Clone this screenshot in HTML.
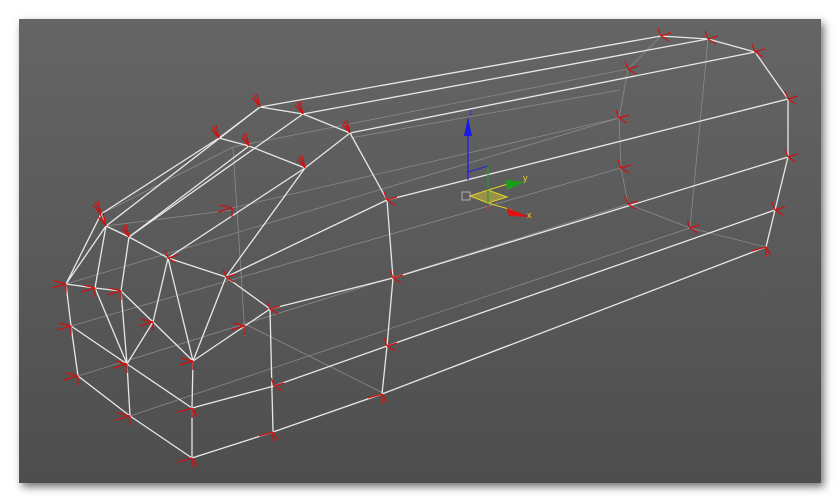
<!DOCTYPE html>
<html><head><meta charset="utf-8"><style>
html,body{margin:0;padding:0;background:#fff;width:840px;height:502px;overflow:hidden}
#vp{position:absolute;left:19px;top:19px;width:802px;height:464px;background:linear-gradient(#656565,#4e4e4e);box-shadow:3px 4px 8px rgba(0,0,0,0.55)}
svg{position:absolute;left:0;top:0}
</style></head><body>
<div id="vp"></div>
<svg width="840" height="502" viewBox="0 0 840 502" font-family="Liberation Sans, sans-serif">
<defs>
<g id="t1" stroke="#d01010" stroke-width="1.2"><line x1="0" y1="0" x2="-6" y2="-12"/><line x1="0" y1="0" x2="-3" y2="-13"/><line x1="0" y1="0" x2="-8" y2="-9"/></g>
<g id="t2" stroke="#d01010" stroke-width="1.2"><line x1="0" y1="0" x2="-14" y2="4"/><line x1="0" y1="0" x2="-12" y2="-3"/><line x1="0" y1="0" x2="0" y2="9"/></g>
<g id="t3" stroke="#d01010" stroke-width="1.2"><line x1="0" y1="0" x2="10" y2="-3"/><line x1="0" y1="0" x2="8" y2="5"/><line x1="0" y1="0" x2="-3" y2="-8"/></g>
<g id="t4" stroke="#d01010" stroke-width="1.2"><line x1="0" y1="0" x2="-14" y2="4"/><line x1="0" y1="0" x2="5" y2="8"/><line x1="0" y1="0" x2="0" y2="10"/></g>
</defs>
<g stroke="#8a8a8a" stroke-width="0.8" fill="none">
<line x1="101" y1="214" x2="233" y2="147"/>
<line x1="233" y1="147" x2="245" y2="336"/>
<line x1="106" y1="226" x2="232" y2="210"/>
<line x1="233" y1="147" x2="628" y2="69"/>
<line x1="232" y1="208" x2="619" y2="118"/>
<line x1="66" y1="284" x2="619" y2="118"/>
<line x1="71" y1="326" x2="621" y2="168"/>
<line x1="78" y1="376" x2="628" y2="204"/>
<line x1="130" y1="416" x2="690" y2="228"/>
<line x1="243" y1="323" x2="383" y2="393"/>
<line x1="350" y1="138" x2="620" y2="90"/>
<line x1="661" y1="36" x2="628" y2="69"/>
<polyline points="628,69 619,118 621,168 628,204 690,228 766,247"/>
<line x1="708" y1="39" x2="690" y2="228"/>
</g>
<g stroke="#e8e8e8" stroke-width="1.3" fill="none" stroke-linejoin="round">
<polyline points="661,36 708,39 755,52 788,99 788,157 775,210 766,247"/>
<line x1="260" y1="107" x2="661" y2="36"/>
<line x1="303" y1="114" x2="708" y2="39"/>
<line x1="350" y1="133" x2="755" y2="52"/>
<line x1="387" y1="200" x2="788" y2="99"/>
<line x1="393" y1="278" x2="788" y2="157"/>
<line x1="387" y1="346" x2="775" y2="210"/>
<line x1="382" y1="394" x2="766" y2="247"/>
<polyline points="260,107 303,114 350,133 387,200 393,278 387,346 382,394"/>
<polyline points="101,214 219,138 260,107"/>
<line x1="106" y1="226" x2="260" y2="107"/>
<line x1="129" y1="237" x2="249" y2="146"/>
<line x1="129" y1="237" x2="303" y2="114"/>
<polyline points="219,138 249,146 305,168 350,133"/>
<line x1="168" y1="258" x2="305" y2="168"/>
<line x1="226" y1="277" x2="305" y2="168"/>
<line x1="226" y1="277" x2="387" y2="200"/>
<line x1="270" y1="309" x2="393" y2="278"/>
<line x1="274" y1="386" x2="387" y2="346"/>
<polyline points="101,214 106,226 129,237 168,258 226,277 270,309 273,432 382,394"/>
<line x1="101" y1="214" x2="66" y2="284"/>
<line x1="106" y1="226" x2="66" y2="284"/>
<line x1="106" y1="226" x2="95" y2="288"/>
<line x1="129" y1="237" x2="121" y2="291"/>
<polyline points="66,284 95,288 121,291"/>
<polyline points="121,291 153,322 193,361"/>
<line x1="95" y1="288" x2="127" y2="364"/>
<line x1="121" y1="291" x2="127" y2="364"/>
<line x1="168" y1="258" x2="153" y2="322"/>
<line x1="168" y1="258" x2="193" y2="361"/>
<line x1="153" y1="322" x2="127" y2="364"/>
<line x1="226" y1="277" x2="193" y2="361"/>
<line x1="193" y1="361" x2="270" y2="309"/>
<polyline points="66,284 71,326 78,376 130,416 192,458 273,432"/>
<line x1="71" y1="326" x2="127" y2="364"/>
<polyline points="127,364 192,408 274,386"/>
<line x1="127" y1="364" x2="130" y2="416"/>
<line x1="193" y1="361" x2="192" y2="408"/>
<line x1="192" y1="408" x2="192" y2="458"/>
</g>
<g>
<use href="#t1" x="101" y="214"/><use href="#t1" x="106" y="226"/><use href="#t1" x="129" y="237"/>
<use href="#t1" x="260" y="107"/><use href="#t1" x="303" y="114"/><use href="#t1" x="350" y="133"/>
<use href="#t1" x="219" y="138"/><use href="#t1" x="249" y="146"/><use href="#t1" x="305" y="168"/>
<use href="#t2" x="66" y="284"/><use href="#t2" x="95" y="288"/><use href="#t2" x="121" y="291"/>
<use href="#t2" x="71" y="326"/><use href="#t2" x="78" y="376"/><use href="#t2" x="130" y="416"/>
<use href="#t4" x="192" y="458"/><use href="#t4" x="273" y="432"/><use href="#t4" x="382" y="394"/>
<use href="#t2" x="153" y="322"/><use href="#t2" x="193" y="361"/><use href="#t2" x="127" y="364"/>
<use href="#t4" x="192" y="408"/><use href="#t3" x="270" y="309"/><use href="#t3" x="274" y="386"/>
<use href="#t3" x="226" y="277"/><use href="#t3" x="387" y="200"/><use href="#t3" x="393" y="278"/>
<use href="#t3" x="387" y="346"/><use href="#t3" x="168" y="258"/>
<use href="#t3" x="661" y="36"/><use href="#t3" x="708" y="39"/><use href="#t3" x="755" y="52"/>
<use href="#t3" x="788" y="99"/><use href="#t3" x="788" y="157"/><use href="#t3" x="775" y="210"/>
<use href="#t4" x="766" y="247"/><use href="#t3" x="628" y="69"/><use href="#t3" x="619" y="118"/>
<use href="#t3" x="621" y="168"/><use href="#t3" x="628" y="204"/><use href="#t3" x="690" y="228"/>
<use href="#t2" x="232" y="208"/><use href="#t2" x="245" y="326"/>
</g>
<!-- gizmo -->
<g>
<polygon points="470,196 488,190 507,197 488,203" fill="rgba(200,190,60,0.55)" stroke="#e6d020" stroke-width="1"/>
<line x1="488" y1="203" x2="512" y2="210" stroke="#e6d020" stroke-width="1"/>
<line x1="488" y1="190" x2="508" y2="184" stroke="#e6d020" stroke-width="1"/>
<line x1="468" y1="180" x2="468" y2="130" stroke="#2020e0" stroke-width="1.3"/>
<polygon points="468,117 464,136 472,136" fill="#1a1ae8"/>
<polyline points="468,172 488,166 488,176" stroke="#2020e0" fill="none" stroke-width="1"/>
<line x1="488" y1="165" x2="488" y2="205" stroke="#20a020" stroke-width="1"/>
<line x1="488" y1="205" x2="488" y2="210" stroke="#d02020" stroke-width="1"/>
<polygon points="506,180 524,182 507,190" fill="#18a018"/>
<polygon points="507,208 530,217 509,216" fill="#e01010"/>
<rect x="462" y="192" width="8" height="8" fill="none" stroke="#b0b0b0" stroke-width="1"/>
<text x="469" y="115" fill="#3030e0" font-size="8">z</text>
<text x="523" y="181" fill="#e8d020" font-size="9">y</text>
<text x="527" y="218" fill="#e8d020" font-size="9">x</text>
</g>
</svg>
</body></html>
